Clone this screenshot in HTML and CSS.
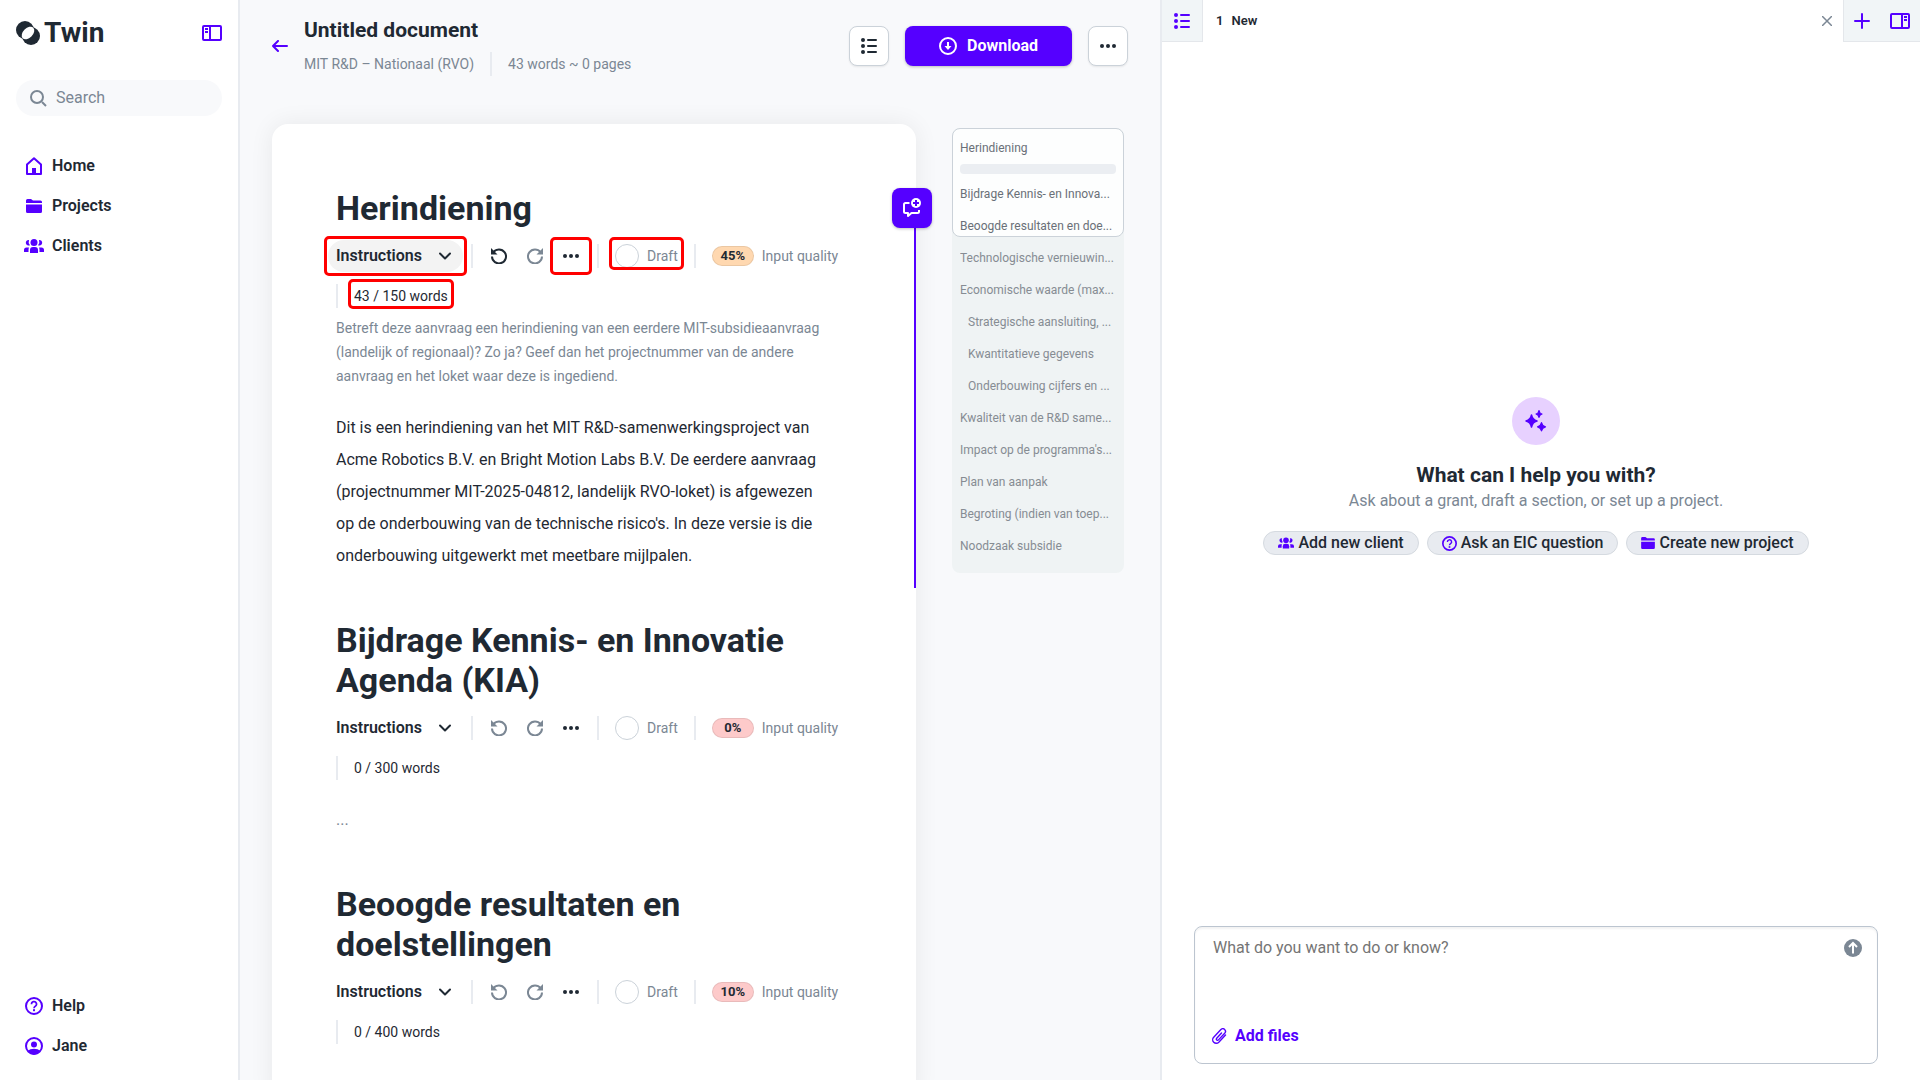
FILE: index.html
```html
<!DOCTYPE html>
<html lang="en">
<head>
<meta charset="utf-8">
<meta name="viewport" content="width=device-width, initial-scale=1">
<title>Untitled document – Twin</title>
<link rel="stylesheet" href="styles.css">
</head>
<body>
<svg class="sprite" aria-hidden="true">
  <symbol id="i-list" viewBox="0 0 16 16"><g fill="currentColor"><circle cx="2" cy="2" r="2"/><circle cx="2" cy="8" r="2"/><circle cx="2" cy="14" r="2"/><rect x="6" y="1" width="10" height="2" rx="1"/><rect x="6" y="7" width="10" height="2" rx="1"/><rect x="6" y="13" width="10" height="2" rx="1"/></g></symbol>
  <symbol id="i-dots" viewBox="0 0 16 16"><g fill="currentColor"><circle cx="2" cy="8" r="2"/><circle cx="8" cy="8" r="2"/><circle cx="14" cy="8" r="2"/></g></symbol>
  <symbol id="i-undo" viewBox="0 0 16 16"><path d="M2.400 4.200A7 7 0 1 1 1 8.500" fill="none" stroke="currentColor" stroke-width="2"/><path d="M0 0v6.500h6.500z" fill="currentColor"/></symbol>
  <symbol id="i-redo" viewBox="0 0 16 16"><path d="M13.600 4.200A7 7 0 1 0 15 8.500" fill="none" stroke="currentColor" stroke-width="2"/><path d="M16 0v6.500H9.500z" fill="currentColor"/></symbol>
  <symbol id="i-chevron" viewBox="0 0 12 12"><path d="M1 3.500l5 5 5-5" fill="none" stroke="currentColor" stroke-width="2" stroke-linecap="round" stroke-linejoin="round"/></symbol>
  <symbol id="i-panel" viewBox="0 0 20 16"><rect x="1" y="1" width="18" height="14" rx="1" fill="none" stroke="currentColor" stroke-width="2"/><path d="M8 1v14" stroke="currentColor" stroke-width="2"/><path d="M3 3h3v2H3zM3 6h3v2H3z" fill="currentColor"/></symbol>
  <symbol id="i-folder" viewBox="0 0 16 14"><path d="M0 1.500Q0 0 1.500 0h3.500l2 1.500h7.500Q16 1.500 16 3v1H0zM0 5.500h16v7q0 1.500-1.500 1.500h-13Q0 14 0 12.500z" fill="currentColor"/></symbol>
  <symbol id="i-group" viewBox="0 0 20 14"><g fill="currentColor"><circle cx="10" cy="3.500" r="3.500"/><path d="M6 14v-3q0-3 3-3h2q3 0 3 3v3z"/><path d="M5 1a2.800 2.800 0 1 0 1 5.200A5 5 0 0 1 5 1zM15 1a2.800 2.800 0 1 1-1 5.200A5 5 0 0 0 15 1z"/><path d="M5 8.500H2.500Q0 8.500 0 11v2h4.500v-2q0-1.500.5-2.500zM15 8.500h2.500Q20 8.500 20 11v2h-4.500v-2q0-1.500-.5-2.500z"/></g></symbol>
  <symbol id="i-help" viewBox="0 0 18 18"><circle cx="9" cy="9" r="8" fill="none" stroke="currentColor" stroke-width="2"/><path d="M6.500 7.200a2.500 2.500 0 1 1 3.800 2q-1.300.8-1.300 2" fill="none" stroke="currentColor" stroke-width="1.700"/><rect x="8" y="12.200" width="2" height="2" fill="currentColor"/></symbol>
</svg>

<div class="app">
  <aside class="sidebar">
    <div class="brand-row">
      <a class="brand" href="#">
        <svg width="24" height="24" viewBox="0 0 24 24" aria-hidden="true"><circle cx="9" cy="9" r="9" fill="#1f2933"/><circle cx="15" cy="15" r="9" fill="#1f2933"/><ellipse cx="12" cy="12" rx="7.500" ry="4.800" transform="rotate(-45 12 12)" fill="#fff"/></svg>
        <span class="wordmark">Twin</span>
      </a>
      <button class="icon-btn" aria-label="Collapse sidebar"><svg width="20" height="16"><use href="#i-panel"/></svg></button>
    </div>
    <label class="search">
      <svg width="17" height="17" viewBox="0 0 17 17" fill="none" stroke="currentColor" stroke-width="2" aria-hidden="true"><circle cx="7" cy="7" r="6"/><path d="M12 12l4 4"/></svg>
      <input type="search" placeholder="Search" aria-label="Search">
    </label>
    <nav class="nav">
      <a href="#"><span class="nav-icon"><svg width="16" height="18" viewBox="0 0 16 18"><path d="M1 7.500L8 1.200l7 6.300V17H1z" fill="none" stroke="currentColor" stroke-width="2" stroke-linejoin="round"/><path d="M6 17v-6h4v6z" fill="currentColor"/></svg></span>Home</a>
      <a href="#"><span class="nav-icon"><svg width="16" height="14"><use href="#i-folder"/></svg></span>Projects</a>
      <a href="#"><span class="nav-icon"><svg width="20" height="14"><use href="#i-group"/></svg></span>Clients</a>
    </nav>
    <nav class="nav nav-bottom">
      <a href="#"><span class="nav-icon"><svg width="18" height="18"><use href="#i-help"/></svg></span>Help</a>
      <a href="#"><span class="nav-icon"><svg width="18" height="18" viewBox="0 0 18 18"><circle cx="9" cy="9" r="8" fill="none" stroke="currentColor" stroke-width="2"/><circle cx="9" cy="7.500" r="3" fill="currentColor"/><path d="M2.500 14Q5 11.800 9 11.800t6.500 2.200Q13 17.500 9 17.500T2.500 14z" fill="currentColor"/></svg></span>Jane</a>
    </nav>
  </aside>

  <main class="main">
    <header class="doc-header">
      <button class="icon-btn" aria-label="Back"><svg width="16" height="12" viewBox="0 0 16 12" fill="none" stroke="currentColor" stroke-width="2" stroke-linecap="round" stroke-linejoin="round"><path d="M15 6H1M6 1L1 6l5 5"/></svg></button>
      <div class="doc-titles">
        <h1>Untitled document</h1>
        <div class="doc-meta"><span>MIT R&amp;D – Nationaal (RVO)</span><span class="divider"></span><span>43 words ~ 0 pages</span></div>
      </div>
      <div class="doc-actions">
        <button class="square-btn" aria-label="Outline"><svg width="16" height="16"><use href="#i-list"/></svg></button>
        <button class="primary-btn"><svg width="18" height="18" viewBox="0 0 18 18" fill="none" stroke="currentColor" stroke-width="2" aria-hidden="true"><circle cx="9" cy="9" r="8"/><path d="M9 5v5"/><path d="M5.500 9h7L9 13z" fill="currentColor" stroke="none"/></svg>Download</button>
        <button class="square-btn" aria-label="More"><svg width="16" height="16"><use href="#i-dots"/></svg></button>
      </div>
    </header>

    <div class="workspace">
      <article class="page">
        <section class="section section-active">
          <button class="comment-btn" aria-label="Add comment"><svg width="18" height="20" viewBox="0 0 18 20"><path d="M6.500 5H2.500Q1 5 1 6.500v7Q1 15 2.500 15H5v3l3.500-3h6q1.500 0 1.500-1.500V12" fill="none" stroke="currentColor" stroke-width="2" stroke-linejoin="round"/><circle cx="13" cy="5" r="5" fill="currentColor"/><path d="M13 2v6M10 5h6" stroke="#5500ff" stroke-width="2"/></svg></button>
          <h2>Herindiening</h2>
          <div class="tools">
            <button class="instructions is-hover marked">Instructions<svg width="12" height="12"><use href="#i-chevron"/></svg></button>
            <span class="divider"></span>
            <span class="history">
              <button class="tool-btn" aria-label="Undo"><svg width="16" height="16"><use href="#i-undo"/></svg></button>
              <button class="tool-btn muted" aria-label="Redo"><svg width="16" height="16"><use href="#i-redo"/></svg></button>
              <button class="tool-btn marked marked-wide" aria-label="More"><svg width="16" height="16"><use href="#i-dots"/></svg></button>
            </span>
            <span class="divider"></span>
            <label class="draft marked marked-tight"><input type="radio" name="s1">Draft</label>
            <span class="divider"></span>
            <span class="quality"><span class="badge badge-mid">45%</span>Input quality</span>
            <span class="count"><span class="divider"></span><span class="marked marked-text">43 / 150 words</span></span>
          </div>
          <p class="hint">Betreft deze aanvraag een herindiening van een eerdere MIT-subsidieaanvraag (landelijk of regionaal)? Zo ja? Geef dan het projectnummer van de andere aanvraag en het loket waar deze is ingediend.</p>
          <p class="body">Dit is een herindiening van het MIT R&amp;D-samenwerkingsproject van Acme Robotics B.V. en Bright Motion Labs B.V. De eerdere aanvraag (projectnummer MIT-2025-04812, landelijk RVO-loket) is afgewezen op de onderbouwing van de technische risico's. In deze versie is die onderbouwing uitgewerkt met meetbare mijlpalen.</p>
        </section>

        <section class="section">
          <h2>Bijdrage Kennis- en Innovatie Agenda (KIA)</h2>
          <div class="tools">
            <button class="instructions">Instructions<svg width="12" height="12"><use href="#i-chevron"/></svg></button>
            <span class="divider"></span>
            <span class="history">
              <button class="tool-btn muted" aria-label="Undo"><svg width="16" height="16"><use href="#i-undo"/></svg></button>
              <button class="tool-btn muted" aria-label="Redo"><svg width="16" height="16"><use href="#i-redo"/></svg></button>
              <button class="tool-btn" aria-label="More"><svg width="16" height="16"><use href="#i-dots"/></svg></button>
            </span>
            <span class="divider"></span>
            <label class="draft"><input type="radio" name="s2">Draft</label>
            <span class="divider"></span>
            <span class="quality"><span class="badge badge-low">0%</span>Input quality</span>
            <span class="count"><span class="divider"></span><span>0 / 300 words</span></span>
          </div>
          <p class="body empty">...</p>
        </section>

        <section class="section">
          <h2>Beoogde resultaten en doelstellingen</h2>
          <div class="tools">
            <button class="instructions">Instructions<svg width="12" height="12"><use href="#i-chevron"/></svg></button>
            <span class="divider"></span>
            <span class="history">
              <button class="tool-btn muted" aria-label="Undo"><svg width="16" height="16"><use href="#i-undo"/></svg></button>
              <button class="tool-btn muted" aria-label="Redo"><svg width="16" height="16"><use href="#i-redo"/></svg></button>
              <button class="tool-btn" aria-label="More"><svg width="16" height="16"><use href="#i-dots"/></svg></button>
            </span>
            <span class="divider"></span>
            <label class="draft"><input type="radio" name="s3">Draft</label>
            <span class="divider"></span>
            <span class="quality"><span class="badge badge-low">10%</span>Input quality</span>
            <span class="count"><span class="divider"></span><span>0 / 400 words</span></span>
          </div>
        </section>
      </article>

      <nav class="minimap" aria-label="Outline">
        <div class="minimap-view">
          <a href="#">Herindiening</a>
          <div class="minimap-bar"></div>
          <a href="#">Bijdrage Kennis- en Innova...</a>
          <a href="#">Beoogde resultaten en doe...</a>
        </div>
        <div class="minimap-rest">
          <a href="#">Technologische vernieuwin...</a>
          <a href="#">Economische waarde (max...</a>
          <a href="#" class="sub">Strategische aansluiting, ...</a>
          <a href="#" class="sub">Kwantitatieve gegevens</a>
          <a href="#" class="sub">Onderbouwing cijfers en ...</a>
          <a href="#">Kwaliteit van de R&amp;D same...</a>
          <a href="#">Impact op de programma's...</a>
          <a href="#">Plan van aanpak</a>
          <a href="#">Begroting (indien van toep...</a>
          <a href="#">Noodzaak subsidie</a>
        </div>
      </nav>
    </div>
  </main>

  <aside class="chat">
    <div class="tabs">
      <button class="tab-side tab-list" aria-label="Chats"><svg width="16" height="16"><use href="#i-list"/></svg></button>
      <div class="tab"><span>1</span><span>New</span><button class="tab-close" aria-label="Close tab"><svg width="10" height="10" viewBox="0 0 10 10" stroke="currentColor" stroke-width="1.500"><path d="M0 0l10 10M10 0L0 10"/></svg></button></div>
      <div class="tab-side tab-tools">
        <button class="icon-btn" aria-label="New tab"><svg width="16" height="16" viewBox="0 0 16 16" stroke="currentColor" stroke-width="2" stroke-linecap="round"><path d="M8 1v14M1 8h14"/></svg></button>
        <button class="icon-btn" aria-label="Toggle panel"><svg width="20" height="16" viewBox="0 0 20 16"><rect x="1" y="1" width="18" height="14" rx="1" fill="none" stroke="currentColor" stroke-width="2"/><path d="M12 1v14" stroke="currentColor" stroke-width="2"/><path d="M14 3h3v2h-3zM14 6h3v2h-3z" fill="currentColor"/></svg></button>
      </div>
    </div>
    <div class="welcome">
      <div class="spark"><svg width="22" height="22" viewBox="0 0 22 22" fill="currentColor"><path d="M6.500 5Q7.500 10 12 11 7.500 12 6.500 17 5.500 12 1 11 5.500 10 6.500 5z" stroke="currentColor" stroke-width="1.500" stroke-linejoin="round"/><path d="M14 .5Q14.600 3.400 17 4 14.600 4.600 14 7.500 13.400 4.600 11 4 13.400 3.400 14 .5zM16.500 12.500Q17.200 16 20.500 16.800 17.200 17.600 16.500 21 15.800 17.600 12.500 16.800 15.800 16 16.500 12.500z" stroke="currentColor" stroke-width="1.200" stroke-linejoin="round"/></svg></div>
      <h2>What can I help you with?</h2>
      <p>Ask about a grant, draft a section, or set up a project.</p>
      <div class="chips">
        <button class="chip"><svg width="16" height="12"><use href="#i-group"/></svg>Add new client</button>
        <button class="chip"><svg width="15" height="15"><use href="#i-help"/></svg>Ask an EIC question</button>
        <button class="chip"><svg width="14" height="12"><use href="#i-folder"/></svg>Create new project</button>
      </div>
    </div>
    <form class="composer">
      <div class="composer-top">
        <textarea placeholder="What do you want to do or know?" aria-label="Message"></textarea>
        <button class="send" type="button" aria-label="Send"><svg width="18" height="18" viewBox="0 0 18 18"><circle cx="9" cy="9" r="9" fill="#7b8794"/><path d="M9 14.500V4M5 8l4-4 4 4" fill="none" stroke="#fff" stroke-width="2"/></svg></button>
      </div>
      <button class="add-files" type="button"><svg width="16" height="16" viewBox="0 0 16 16" fill="none" stroke="currentColor" stroke-width="1.400" stroke-linecap="round" aria-hidden="true"><path d="M10.500 5L5.700 10.300a1.200 1.200 0 0 0 1.800 1.600L13.700 5.200A2.600 2.600 0 0 0 9.900 1.600L2.700 9.200a3.500 3.500 0 0 0 5.100 5L14.500 7"/></svg>Add files</button>
    </form>
  </aside>
</div>
</body>
</html>
```
FILE: styles.css
```css
* { box-sizing: border-box; }

:root {
  --accent: #5500ff;
  --ink: #1f2933;
  --muted: #7b8794;
  --line: #e4e7eb;
  --edge: #cbd2d9;
  --canvas: #f8f9fb;
}

body {
  margin: 0;
  color: var(--ink);
  font: 16px/24px Roboto, "Liberation Sans", sans-serif;
}

h1, h2, p { margin: 0; }

svg { display: block; flex: none; }

.sprite { position: absolute; width: 0; height: 0; }

button {
  display: flex;
  align-items: center;
  justify-content: center;
  padding: 0;
  border: 0;
  background: none;
  color: inherit;
  font: inherit;
  cursor: pointer;
}

a { color: inherit; text-decoration: none; }

.app {
  display: grid;
  grid-template-columns: 240px minmax(0, 1fr) 760px;
  height: 100vh;
}

.icon-btn { color: var(--accent); }

.divider {
  flex: none;
  width: 2px;
  height: 24px;
  background: #e8ebf0;
}

/* Sidebar */
.sidebar {
  display: flex;
  flex-direction: column;
  padding: 20px 16px 14px;
  border-right: 2px solid #e8ebf0;
  background: #fff;
}

.brand-row {
  display: flex;
  align-items: center;
  justify-content: space-between;
  height: 26px;
}

.brand { display: flex; align-items: center; gap: 4px; }

.wordmark { font-size: 28px; font-weight: 700; }

.search {
  display: flex;
  align-items: center;
  gap: 9px;
  height: 36px;
  margin-top: 34px;
  padding: 0 14px;
  border-radius: 18px;
  background: var(--canvas);
  color: var(--muted);
}

.search input {
  min-width: 0;
  flex: 1;
  padding: 0;
  border: 0;
  outline: 0;
  background: none;
  font: inherit;
}

.search input::placeholder { color: var(--muted); opacity: 1; }

.nav { margin-top: 30px; }

.nav a {
  display: flex;
  align-items: center;
  gap: 8px;
  height: 40px;
  padding-left: 8px;
  font-weight: 600;
}

.nav-icon {
  display: flex;
  justify-content: center;
  width: 20px;
  color: var(--accent);
}

.nav-bottom { margin-top: auto; }

/* Document area */
.main {
  overflow: hidden auto;
  scrollbar-width: none;
  background: var(--canvas);
}

.doc-header {
  display: flex;
  align-items: center;
  gap: 16px;
  padding: 16px 32px 0;
}

.doc-titles { display: grid; gap: 8px; flex: 1; }

.doc-titles h1 { font-size: 21px; line-height: 28px; }

.doc-meta {
  display: flex;
  gap: 16px;
  color: var(--muted);
  font-size: 14px;
}

.doc-actions { display: flex; gap: 16px; }

.square-btn {
  width: 40px;
  height: 40px;
  border: 1px solid var(--edge);
  border-radius: 8px;
  background: #fff;
  box-shadow: 0 1px 2px rgba(0, 0, 0, .08);
}

.primary-btn {
  gap: 10px;
  height: 40px;
  padding: 0 34px;
  border-radius: 8px;
  background: var(--accent);
  box-shadow: 0 1px 3px rgba(0, 0, 0, .25);
  color: #fff;
  font-weight: 700;
}

.workspace {
  display: flex;
  align-items: flex-start;
  gap: 36px;
  margin-top: 48px;
  padding: 0 36px 0 32px;
}

.page {
  flex: 1;
  min-width: 0;
  padding: 32px 0;
  border-radius: 16px 16px 0 0;
  background: #fff;
  box-shadow: 0 0 24px rgba(0, 0, 0, .07);
}

.section { position: relative; padding: 32px 64px 16px; }

.section h2 { margin-bottom: 8px; font-size: 34px; line-height: 40px; }

/* Accent rule that marks the section being edited */
.section-active::after {
  content: "";
  position: absolute;
  top: 52px;
  right: 0;
  bottom: 0;
  width: 2px;
  background: var(--accent);
}

.comment-btn {
  position: absolute;
  z-index: 1;
  top: 32px;
  right: -16px;
  width: 40px;
  height: 40px;
  border-radius: 8px;
  background: var(--accent);
  box-shadow: 0 1px 3px rgba(0, 0, 0, .25);
  color: #fff;
}

.tools {
  display: flex;
  flex-wrap: wrap;
  align-items: center;
  column-gap: 16px;
  font-size: 14px;
}

.tools > * { margin: 8px 0; }

.tools > .instructions {
  justify-content: space-between;
  width: 135px;
  height: 32px;
  margin: 4px -8px;
  padding: 0 12px 0 8px;
  border-radius: 16px;
  font-size: 16px;
  font-weight: 600;
}

.is-hover { background: #f3f3f3; }

.tools > .history { display: flex; gap: 4px; margin: 8px -6px; }

.tool-btn { width: 32px; height: 24px; }

.muted, .draft, .quality, .hint { color: var(--muted); }

.draft, .quality, .count { display: flex; align-items: center; }

.draft, .quality { gap: 8px; }

.draft input {
  appearance: none;
  width: 24px;
  height: 24px;
  margin: 0;
  border: 1px solid var(--edge);
  border-radius: 50%;
}

.badge {
  width: 42px;
  height: 20px;
  border: 1px solid rgba(0, 0, 0, .08);
  border-radius: 10px;
  color: var(--ink);
  font-size: 13px;
  font-weight: 700;
  line-height: 18px;
  text-align: center;
}

.badge-mid { background: #ffd8b0; }
.badge-low { background: #fdcaca; }

.count { gap: 16px; color: var(--ink); }

/* Red callout frames around toolbar controls */
.marked { position: relative; }

.marked::after {
  content: "";
  position: absolute;
  inset: -4px;
  border: 3px solid #f00;
  border-radius: 5px;
  pointer-events: none;
}

.marked-wide::after { inset: -7px -5px; }
.marked-tight::after { inset: -7px -6px -2px; }
.marked-text::after { inset: -5px -6px -1px; }

.hint { margin-bottom: 24px; font-size: 14px; }

.body { padding-right: 20px; line-height: 32px; }

.empty { margin-top: 16px; color: var(--muted); }

/* Outline minimap */
.minimap {
  width: 172px;
  margin-top: 4px;
  border-radius: 8px;
  background: #eff3f4;
  font-size: 12px;
  line-height: 32px;
}

.minimap a {
  display: block;
  overflow: hidden;
  white-space: nowrap;
}

.minimap-view {
  height: 109px;
  padding: 3px 7px 0;
  overflow: hidden;
  border: 1px solid var(--edge);
  border-radius: 8px;
  background: #fdfefe;
  color: #6a7078;
}

.minimap-bar {
  height: 10px;
  margin-bottom: 4px;
  border-radius: 4px;
  background: #ebeef2;
}

.minimap-rest { padding: 5px 8px 11px; color: #868c93; }

.minimap .sub { padding-left: 8px; }

/* Chat panel */
.chat {
  display: flex;
  flex-direction: column;
  border-left: 2px solid #e8ebf0;
  background: #fff;
}

.tabs { display: flex; height: 42px; }

.tab-side {
  border-bottom: 1px solid var(--line);
  background: #f1f5f7;
  color: var(--accent);
}

.tab-list { width: 41px; border-right: 1px solid var(--line); }

.tab {
  display: flex;
  flex: 1;
  align-items: center;
  gap: 8px;
  padding: 0 11px 0 13px;
  font-size: 13px;
  font-weight: 600;
}

.tab-close { margin-left: auto; color: var(--muted); }

.tab-tools {
  display: flex;
  gap: 20px;
  padding: 0 10px;
  border-left: 1px solid var(--line);
}

.welcome {
  display: flex;
  flex: 1;
  flex-direction: column;
  align-items: center;
  justify-content: center;
  padding: 0 42px 0 32px;
  text-align: center;
}

.spark {
  display: grid;
  place-items: center;
  width: 48px;
  height: 48px;
  margin-bottom: 16px;
  border-radius: 50%;
  background: #e7d1ff;
  color: var(--accent);
}

.welcome h2 { font-size: 21px; line-height: 28px; }

.welcome p { color: var(--muted); }

.chips { display: flex; gap: 8px; margin-top: 18px; }

.chip {
  gap: 4px;
  height: 24px;
  padding: 0 14px;
  border: 1px solid #d5dae0;
  border-radius: 12px;
  background: #e8ebf0;
  font-weight: 500;
}

.chip svg { color: var(--accent); }

.composer {
  display: flex;
  flex-direction: column;
  justify-content: space-between;
  height: 138px;
  margin: 16px 42px 16px 32px;
  padding: 9px 15px 15px 16px;
  border: 1px solid #bcc5d0;
  border-radius: 8px;
  box-shadow: inset 0 2px 2px rgba(0, 0, 0, .05);
}

.composer-top { display: flex; align-items: flex-start; }

.composer textarea {
  flex: 1;
  height: 72px;
  padding: 0 2px;
  border: 0;
  outline: 0;
  resize: none;
  background: none;
  font: inherit;
}

.composer textarea::placeholder { color: #757575; opacity: 1; }

.send { height: 24px; }

.add-files {
  align-self: flex-start;
  gap: 8px;
  color: var(--accent);
  font-weight: 700;
}
```
